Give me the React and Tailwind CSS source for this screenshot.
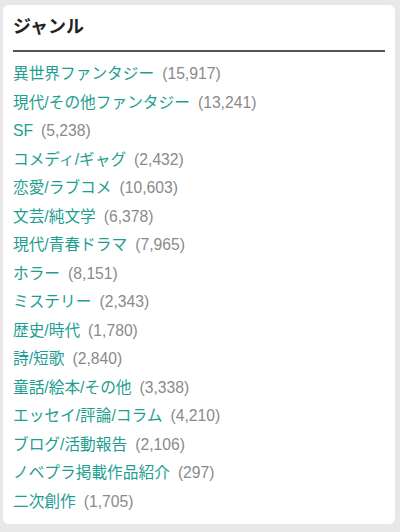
const items = [
  ["異世界ファンタジー", "15,917"],
  ["現代/その他ファンタジー", "13,241"],
  ["SF", "5,238"],
  ["コメディ/ギャグ", "2,432"],
  ["恋愛/ラブコメ", "10,603"],
  ["文芸/純文学", "6,378"],
  ["現代/青春ドラマ", "7,965"],
  ["ホラー", "8,151"],
  ["ミステリー", "2,343"],
  ["歴史/時代", "1,780"],
  ["詩/短歌", "2,840"],
  ["童話/絵本/その他", "3,338"],
  ["エッセイ/評論/コラム", "4,210"],
  ["ブログ/活動報告", "2,106"],
  ["ノベプラ掲載作品紹介", "297"],
  ["二次創作", "1,705"],
];

export default function App() {
  return (
    <div className="min-h-[532px] bg-[#e8e8e8] pt-[5px] pl-[3px] pr-[5px] pb-[9px] font-['Liberation_Sans','Noto_Sans_CJK_JP',sans-serif]">
      <div className="bg-white rounded-[6px] px-[10px] pt-[10px] pb-[8px]">
        <h2 className="text-[18px] leading-[24px] font-bold text-[#222] pb-[11px] border-b-2 border-[#555]">
          ジャンル
        </h2>
        <ul className="mt-[8px]">
          {items.map(([name, count]) => (
            <li key={name} className="leading-[28.5px] text-[15.7px] whitespace-nowrap">
              <span className="text-[#1e9e90]">{name}</span>
              <span className="text-[#8a8a8a] ml-[8px]">({count})</span>
            </li>
          ))}
        </ul>
      </div>
    </div>
  );
}
